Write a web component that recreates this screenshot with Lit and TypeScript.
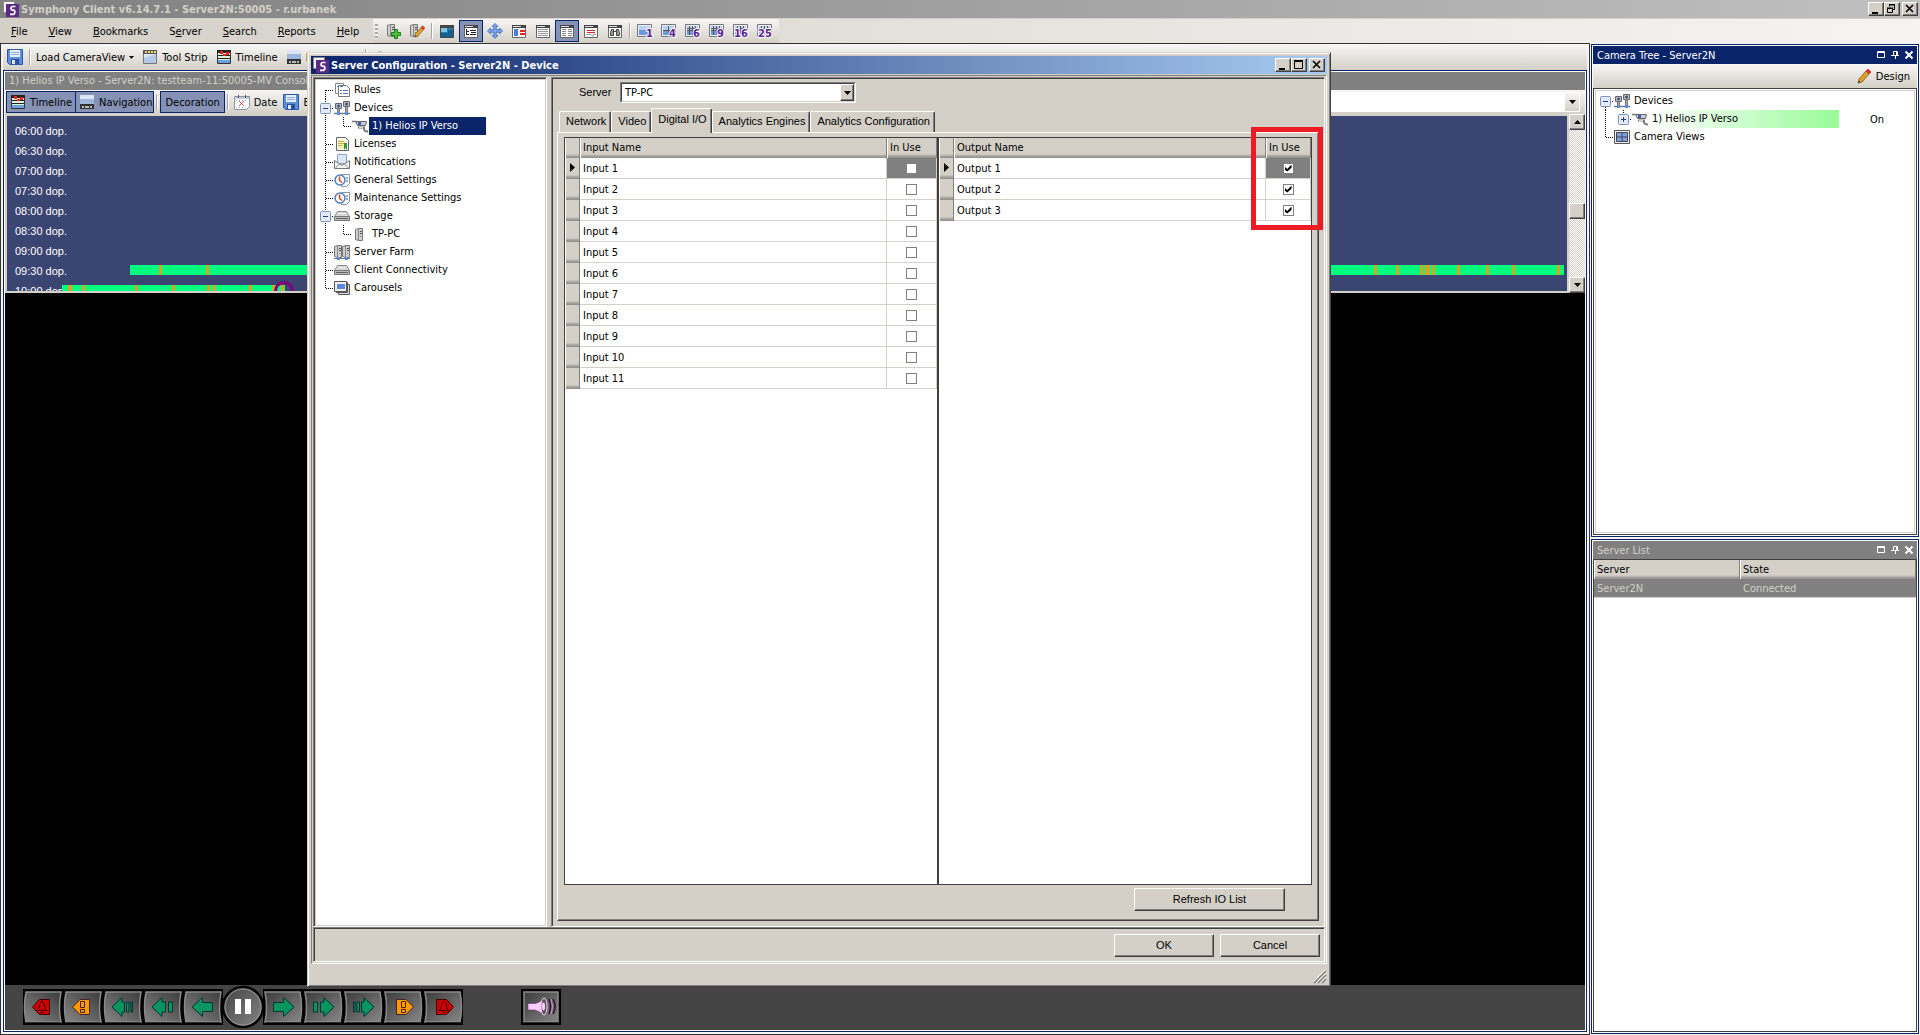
import { LitElement, html, css, svg, nothing, TemplateResult } from "lit";
import { customElement, property } from "lit/decorators.js";
import { classMap } from "lit/directives/class-map.js";
import { styleMap } from "lit/directives/style-map.js";

const icon = (body: unknown, w = 16, h = 16) => html`<svg
  width=${w}
  height=${h}
  viewBox="0 0 ${w} ${h}"
  aria-hidden="true"
>
  ${body}
</svg>`;

const win = (inner: unknown) => svg`<path fill="#fff" stroke="#666" d="M1.500 2.500h13v12h-13z"/><path fill="#444" d="M1 2h14v3H1z"/><path fill="#ddd" d="M2 3h8v1H2z"/>${inner}`;
const grid = (n: string, x: number, cells: number) => svg`<path fill="#eef" stroke="#777" d="M.5 1.500h14v12h-14z"/><path fill="#6f97dc" d="M2 3h11v9H2z"/><path fill="#b9d0f4" d="M2 3h11v4H2z"/>${
  cells > 0 ? svg`<path stroke="#555" d="M2 7.500h11M7.500 3v9"/>` : nothing
}${cells > 1 ? svg`<path stroke="#555" d="M2 5.500h11M4.500 3v9M10.500 3v9"/>` : nothing}<text x=${x} y="14" font-family="DejaVu Sans Condensed, sans-serif" font-size="11" font-weight="700" fill="#5a1e96" stroke="#fff" stroke-width="2" paint-order="stroke">${n}</text>`;
const serverBox = (x: number) => svg`<path fill="#cfcfcf" stroke="#777" d="M${x + 0.5} 2.500l3-1h4v12h-4l-3-1z"/><path stroke="#888" d="M${x + 3.5} 2v11"/><path stroke="#555" d="M${x + 5} 4.500h2M${x + 5} 6.500h2"/><path fill="#3a3" d="M${x + 5} 9h1v1h-1z"/>`;
const drive = svg`<path fill="#d8d8d8" stroke="#888" d="M3.500 3.500h9l3 5h-15z"/><path fill="#bbb" stroke="#777" d="M.5 8.500h15v4h-15z"/><path stroke="#666" d="M2 10.500h12"/><path stroke="#eee" d="M4 5.500h8"/>`;
const clock = svg`<path fill="#fff" stroke="#8a93a8" d="M7.500 2.500h8v9l-3 3h-5z"/><path fill="#9ab" d="M12 5h2v2h-2zM12 8h2v2h-2z"/><circle cx="6" cy="8" r="5" fill="#fff" stroke="#4d7fc4" stroke-width="1.500"/><path fill="none" stroke="#d2451e" stroke-width="1.500" d="M5.500 4.500v4l2.500 2"/>`;
const pencil = svg`<path fill="#e0a030" stroke="#7a5418" stroke-width=".8" d="M3 11l7-8 3 3-7 8-4 1z"/><path fill="#e33" stroke="#922" stroke-width=".6" d="M10 3l2-2 3 3-2 2z"/><path fill="#333" d="M2 15l.8-2.200 1.600 1.500z"/>`;

const ICONS: Record<string, unknown> = {
  app: svg`<path fill="#f4f4f4" stroke="#888" d="M.5 .5h11v11h-11z"/><path fill="#5b2a86" d="M3 3h13v13H3z"/><path fill="none" stroke="#fff" stroke-width="1.700" d="M12.500 5.500H9.500Q8 5.500 8 7.200T9.500 9.200H10.500Q12 9.200 11.800 11.300T9.800 13.300H7"/>`,
  floppy: svg`<path fill="#5e8fdc" stroke="#2d57a8" d="M.5 .5h15v15h-13l-2-2z"/><path fill="#e8f0fc" d="M3 1h10v7H3z"/><path stroke="#8aace0" d="M4 3.500h8M4 5.500h8"/><path fill="#2d4f94" d="M4 10h8v5H4z"/><path fill="#dfe7f4" d="M5 11h3v4H5z"/>`,
  strip: svg`<path fill="#dde8f6" stroke="#777" d="M1.500 1.500h13v13h-13z"/><path fill="#555" d="M1 1h14v4H1z"/><path fill="#f3d77a" d="M3 2h2v2H3zM6 2h2v2H6zM9 2h2v2H9zM12 2h2v2h-2z"/><path fill="#b5cae6" d="M2 9l12-4v9H2z"/>`,
  timeline: svg`<path fill="#dcf3dc" stroke="#333" d="M1.500 1.500h13v13h-13z"/><path fill="#222" d="M1 1h14v3H1zM2 6h12v1H2zM2 9h12v1H2z"/><path fill="#e22" d="M4 2h3v3H4zM10 3h3v3h-3zM7 5h3v2H7z"/><path fill="#6c9fe0" d="M2 11h12v3H2z"/>`,
  nav: svg`<path fill="#9fb6dc" d="M1 1h14v9H1z"/><path fill="#dbe6f5" d="M1 1h14v4H1z"/><path fill="#333" d="M1 10h14v5H1z"/><path fill="#bbb" d="M3 12h2v2H3zM6 12h4v2H6zM11 12h2v2h-2z"/>`,
  date: svg`<path fill="#fff" stroke="#8a93a8" d="M.5 2.500h15v10l-3 3h-12z"/><path fill="#c4cad6" d="M1 3h14v2H1z"/><path stroke="#555" d="M4.500 1v3M11.500 1v3"/><path stroke="#d55" d="M5 7l5 5M10 7l-5 5"/><path stroke="#9ab" stroke-dasharray="1 2" d="M2 6.500h12M2 13.500h9"/>`,
  search: svg`<circle cx="8" cy="8" r="5" fill="#eee" stroke="#777"/>`,
  frame: svg`<path fill="#eee" stroke="#777" d="M1.500 4.500h14v10h-14z"/>`,
  srvAdd: svg`${serverBox(2)}<path fill="#4cc136" stroke="#1c7a12" d="M9.500 6.500h3v3h3v3h-3v3h-3v-3h-3v-3h3z"/>`,
  srvEdit: svg`${serverBox(1)}<g transform="translate(4 2) scale(.8)">${pencil}</g>`,
  monitor: svg`<path fill="#2b7fae" stroke="#444" d="M1.500 2.500h13v12h-13z"/><path fill="#444" d="M1 2h14v3H1z"/><path fill="#12608e" d="M2 10h7V7h5v7H2z"/><path fill="#7cc4e6" d="M2 5h6v4H2z"/>`,
  tree: win(svg`<path stroke="#222" d="M3.500 6v6M4 8.500h2M4 11.500h2M7 7.500h6M8 9.500h5M7 11.500h6"/>`),
  move: svg`<path fill="#7fa8ee" stroke="#3567b8" stroke-width=".8" d="M8 .5l3 3H9.200v3.300h3.300V5l3 3-3 3V9.200H9.200v3.300H11l-3 3-3-3h1.800V9.200H3.500V11l-3-3 3-3v1.800h3.300V3.500H5z"/>`,
  props: win(svg`<path fill="#4a7fd8" d="M3 6h4v7H3z"/><path stroke="#e22" stroke-width="2" d="M9 8h5M9 11h5"/>`),
  list: win(svg`<path stroke="#999" d="M3 6.500h10M3 8.500h10M3 10.500h10M3 12.500h10"/>`),
  cols: win(svg`<path stroke="#888" stroke-width="1" d="M3 6.500h4M9 6.500h4M3 8.500h4M9 8.500h4M3 10.500h4M9 10.500h4M3 12.500h4M9 12.500h4"/>`),
  note: win(svg`<path stroke="#d22" d="M4 7.500h8M4 9.500h8"/><path fill="#fff" stroke="#999" d="M3 11.500h5l2 2v-2h3"/>`),
  find: win(svg`<path fill="#999" stroke="#444" d="M3.500 12.500v-3l1-3h2v6zM9.500 12.500v-6h2l1 3v3zM6.500 8.500h3"/>`),
  g1: grid("1", 9, 0),
  g4: grid("4", 8, 1),
  g6: grid("6", 8, 2),
  g9: grid("9", 8, 2),
  g16: grid("16", 1, 2),
  g25: grid("25", 1, 2),
  pencil,
  rules: svg`<path fill="#fff" stroke="#888" d="M1.500 1.500h8v10h-8z"/><path fill="#fff" stroke="#777" d="M4.500 3.500h8l3 3v8h-11z"/><path stroke="#4a74c8" stroke-width="1" d="M6 8.500h2M9 8.500h5M6 11.500h2M9 11.500h5M3 4.500h2M6 4.500h3"/>`,
  devices: svg`<path fill="#bbb" stroke="#666" d="M1.500 3.500h6v5h-6zM9.500 1.500h6v5h-6z"/><circle cx="4.500" cy="6" r="1.500" fill="#35558f"/><circle cx="12.500" cy="4" r="1.500" fill="#35558f"/><path fill="#aaa" stroke="#777" d="M3.500 8.500h2v4h-2zM11.500 6.500h2v6h-2z"/><path stroke="#777" stroke-width="1.500" d="M0 13.500h16"/><path fill="#5b8be0" d="M3 12h3v3H3zM11 12h3v3h-3z"/>`,
  camera: svg`<path fill="#ccc" stroke="#666" d="M3.500 3.500h11l-1 4h-8z"/><path stroke="#777" stroke-width="1.500" d="M0 3.500h5"/><path fill="#3b62b0" d="M6 4h3v3H6z"/><path fill="none" stroke="#777" stroke-width="2" d="M6 9.500h6v1q0 3 4 3"/><path stroke="#ddd" d="M7 9.500h4"/>`,
  license: svg`<path fill="#fff" stroke="#666" d="M2.500 1.500h9l3 3v10h-12z"/><path fill="#f6f0b0" d="M4 4h7v9H4z"/><path stroke="#c9b54c" d="M4 5.500h6M4 7.500h6M4 9.500h4"/><path fill="#2f9a3a" d="M10 7h3v7l-1.500-2L10 14z"/>`,
  notify: svg`<path fill="#dce8fa" stroke="#8aa4cc" d="M3.500 .5h9v9h-9z"/><path fill="#f4f4f4" stroke="#777" d="M.5 6.500l7.500 5 7.500-5v8H.5z"/><path stroke="#888" d="M1 14.500l5-5M15 14.500l-5-5"/>`,
  clock,
  drive,
  server: svg`<g transform="translate(3 1)">${serverBox(0)}</g>`,
  farm: svg`${serverBox(0)}${serverBox(8)}<path stroke="#777" d="M0 14.500h16"/><path fill="#5b8be0" d="M3 13h3v3H3zM11 13h3v3h-3z"/>`,
  carousel: svg`<path fill="#ddd" stroke="#555" d="M4.500 4.500h11v10h-11zM2.500 2.500h11v10h-11z"/><path fill="#eee" stroke="#555" d="M.5 1.500h12v10H.5z"/><path fill="#5b86da" d="M3 4h8v5H3z"/>`,
  views: svg`<path fill="#eee" stroke="#555" d="M.5 1.500h15v13H.5z"/><path fill="#7ea0dd" stroke="#445" d="M2.500 3.500h11v9h-11z"/><path stroke="#445" d="M8 3v10M2 8h12"/>`,
};
const ic = (name: string) => icon(ICONS[name]);

const base = css`
  *,
  *::before,
  *::after {
    box-sizing: border-box;
  }
  :host {
    font: 11px/13px "DejaVu Sans Condensed", "DejaVu Sans", Tahoma, sans-serif;
    color: #000;
  }
  button,
  select,
  input {
    font: inherit;
    color: inherit;
    margin: 0;
  }
  svg {
    display: block;
    flex: none;
    overflow: visible;
  }
`;

interface Node {
  label: string;
  icon: string;
  open?: boolean;
  state?: string;
  selected?: boolean;
  online?: boolean;
  children?: Node[];
}

@customElement("nav-tree")
class NavTree extends LitElement {
  @property({ attribute: false }) nodes: Node[] = [];

  static styles = [
    base,
    css`
      :host {
        display: block;
      }
      ul {
        list-style: none;
        margin: 0;
        padding: 0;
      }
      .row {
        display: flex;
        align-items: center;
        height: 18px;
        white-space: nowrap;
      }
      .label {
        margin-left: 1px;
        padding: 0 3px;
        line-height: 18px;
      }
      .selected {
        min-width: 117px;
        background: #0a246a;
        color: #fff;
      }
      .online {
        min-width: 190px;
        background: linear-gradient(90deg, #fff, #98fb98);
      }
      .state {
        margin-left: 31px;
      }
    `,
  ];

  private branch(first: boolean, last: boolean, node: Node) {
    return icon(
      svg`<path fill="none" stroke="#000" stroke-dasharray="1 1" d="M9.500 ${first ? 9 : 0}V${last ? 9 : 18}M10 9.500H18"/>${
        node.open === undefined
          ? nothing
          : svg`<rect x="4.500" y="4.500" width="10" height="10" rx="1" fill="#e3eaf6" stroke="#7b93bf"/><path stroke="#1f3f7f" d="M7 9.500h5${node.open ? "" : "M9.500 7v5"}"/>`
      }`,
      18,
      18
    );
  }

  private rows(nodes: Node[], guides: boolean[]): TemplateResult[] {
    return nodes.map((n, i) => {
      const last = i === nodes.length - 1;
      return html`<li>
        <div class="row">
          ${guides.map((g) =>
            icon(g ? svg`<path stroke="#000" stroke-dasharray="1 1" d="M9.500 0V18"/>` : nothing, 18, 18)
          )}
          ${this.branch(i === 0 && guides.length === 0, last, n)}${ic(n.icon)}
          <span class=${classMap({ label: true, selected: !!n.selected, online: !!n.online })}>${n.label}</span>
          ${n.state ? html`<span class="state">${n.state}</span>` : nothing}
        </div>
        ${n.children ? html`<ul>${this.rows(n.children, [...guides, !last])}</ul>` : nothing}
      </li>`;
    });
  }

  render() {
    return html`<ul>${this.rows(this.nodes, [])}</ul>`;
  }
}

@customElement("io-table")
class IoTable extends LitElement {
  @property() kind = "Input";
  @property({ type: Number }) count = 0;
  @property({ type: Boolean }) used = false;

  static styles = [
    base,
    css`
      :host {
        display: block;
        background: #fff;
      }
      table {
        width: 100%;
        border-collapse: separate;
        border-spacing: 0;
        table-layout: fixed;
      }
      th,
      td {
        padding: 0 3px;
        font-weight: 400;
        text-align: left;
      }
      thead th {
        height: 20px;
        padding-bottom: 2px;
        background: linear-gradient(#d4d0c8 80%, #a8a59f 90%, #8c8c8c);
        border-right: 1px solid #808080;
        box-shadow: inset 1px 0 #fff;
      }
      .mark {
        width: 15px;
      }
      .use {
        width: 50px;
      }
      :host([used]) .use {
        width: 45px;
      }
      tbody td {
        height: 21px;
        border-bottom: 1px solid #d4d0c8;
        border-right: 1px solid #d4d0c8;
      }
      tbody td.head {
        padding: 0 0 0 5px;
        border-bottom: 0;
        border-right: 1px solid #808080;
        background: linear-gradient(#d4d0c8 80%, #a8a59f 90%, #8c8c8c);
        box-shadow: inset 1px 0 #fff;
      }
      .head svg {
        margin-top: -2px;
      }
      tbody td.check {
        padding: 0;
      }
      .current {
        background: #808080;
      }
      input {
        appearance: none;
        display: block;
        width: 11px;
        height: 11px;
        margin: 0 auto;
        border: 1px solid #808080;
        background: #fff;
      }
      input:checked::after {
        content: "";
        display: block;
        width: 7px;
        height: 7px;
        margin: 1px;
        background: #000;
        clip-path: polygon(0 30%, 40% 65%, 100% 0, 100% 45%, 40% 100%, 0 70%);
      }
    `,
  ];

  render() {
    return html`<table>
      <thead>
        <tr>
          <th class="mark"></th>
          <th>${this.kind} Name</th>
          <th class="use">In Use</th>
        </tr>
      </thead>
      <tbody>
        ${Array.from({ length: this.count }, (_, i) => {
          const name = `${this.kind} ${i + 1}`;
          return html`<tr>
            <td class="head">${i === 0 ? icon(svg`<path d="M0 0l5 4.500-5 4.500z"/>`, 5, 9) : nothing}</td>
            <td><label for="c${i}">${name}</label></td>
            <td class=${classMap({ check: true, current: i === 0 })}>
              <input type="checkbox" id="c${i}" .checked=${this.used} />
            </td>
          </tr>`;
        })}
      </tbody>
    </table>`;
  }
}

const DEVICE_TREE: Node[] = [
  { label: "Rules", icon: "rules" },
  {
    label: "Devices",
    icon: "devices",
    open: true,
    children: [{ label: "1) Helios IP Verso", icon: "camera", selected: true }],
  },
  { label: "Licenses", icon: "license" },
  { label: "Notifications", icon: "notify" },
  { label: "General Settings", icon: "clock" },
  { label: "Maintenance Settings", icon: "clock" },
  { label: "Storage", icon: "drive", open: true, children: [{ label: "TP-PC", icon: "server" }] },
  { label: "Server Farm", icon: "farm" },
  { label: "Client Connectivity", icon: "drive" },
  { label: "Carousels", icon: "carousel" },
];

const CAMERA_TREE: Node[] = [
  {
    label: "Devices",
    icon: "devices",
    open: true,
    children: [{ label: "1) Helios IP Verso", icon: "camera", open: false, online: true, state: "On" }],
  },
  { label: "Camera Views", icon: "views" },
];

/* Positions along the track, in units of a 1560-unit half hour. */
interface Slot {
  time: string;
  from?: number;
  to?: number;
  events?: [number, number][];
}
const TRACK = 1560;
const SLOTS: Slot[] = [
  { time: "06:00" },
  { time: "06:30" },
  { time: "07:00" },
  { time: "07:30" },
  { time: "08:00" },
  { time: "08:30" },
  { time: "09:00" },
  {
    time: "09:30",
    from: 123,
    to: 1557,
    events: [[152, 3], [199, 3], [1367, 3], [1389, 3], [1413, 3], [1418, 5], [1425, 3], [1450, 3], [1479, 3], [1505, 3], [1550, 3]],
  },
  {
    time: "10:00",
    from: 55,
    to: 278,
    events: [[61, 4], [75, 3], [128, 3], [165, 3], [200, 3], [206, 3], [242, 3], [265, 3], [274, 3]],
  },
];
const pct = (n: number) => `${(n / TRACK) * 100}%`;

const MENU: [string, string, string][] = [
  ["", "F", "ile"],
  ["", "V", "iew"],
  ["", "B", "ookmarks"],
  ["S", "e", "rver"],
  ["", "S", "earch"],
  ["", "R", "eports"],
  ["", "H", "elp"],
];

const GREEN = "#0a9460";
const bell = svg`<path fill="none" stroke="#4a0000" d="M16.500 21.500h11M17.500 21.500q2-1 2-4.500t2.500-5q2.500 1.500 2.500 5t2 4.500M20.500 23.500h3"/>`;
const PLAYER_ICONS: TemplateResult[] = [
  svg`<path fill=${GREEN} stroke="#033" d="M10.500 13.500h10V8.500l10.500 9.500-10.500 9.500v-5h-10z"/>`,
  svg`<path fill=${GREEN} stroke="#033" d="M10.500 13h4v10h-4zM17.500 13H21V8.500l10 9.500-10 9.500V23h-3.500z"/>`,
  svg`<path fill=${GREEN} stroke="#033" d="M10.500 13h1.500v10h-1.500zM14 13h2.500v10h-2.500zM18.500 13h2.500V8.500l10 9.500-10 9.500V23h-2.500z"/>`,
  svg`<path fill="#f90" stroke="#422" d="M13.500 10.500h9.500l7.500 7.500-7.500 7.500h-9.500z"/><path fill="#f90" stroke="#422" d="M18.500 12.500h4v6h-4zM18.500 20.500h4v3h-4z"/>`,
  svg`<path fill="#c00" stroke="#400" d="M13.500 10.500h10l7 7.500-7 7.500h-10z"/><g transform="translate(-1 0)">${bell}</g>`,
];
const NAMES = ["Step", "Fast", "Faster", "Alert", "Alarm"];

@customElement("app-root")
class AppRoot extends LitElement {
  static styles = [
    base,
    css`
      :host {
        display: flex;
        flex-direction: column;
        position: relative;
        min-height: 100vh;
        background: #f5f4f2;
        white-space: nowrap;
      }
      /* window captions */
      .caption {
        display: flex;
        align-items: center;
        height: 18px;
        padding: 0 2px 0 3px;
        gap: 2px;
        font-weight: 700;
      }
      .caption h1,
      .caption h2 {
        flex: 1;
        margin: 0;
        font: inherit;
      }
      .main-caption {
        background: linear-gradient(90deg, #808080, #c0c0c0);
        color: #d4d0c8;
      }
      .sys {
        display: flex;
      }
      .sys button,
      .bevel {
        padding: 0;
        background: #d4d0c8;
        border: 1px solid;
        border-color: #fff #404040 #404040 #fff;
        box-shadow: inset -1px -1px #808080;
      }
      .sys button {
        width: 16px;
        height: 14px;
      }
      .sys button:last-child {
        margin-left: 2px;
      }
      /* menu */
      .menubar {
        display: flex;
        height: 25px;
        border-top: 1px solid #d4d0c8;
        background: linear-gradient(90deg, #d4d0c8, #f5f4f2);
      }
      .menu {
        display: flex;
        width: 373px;
        padding: 0 0 0 5px;
      }
      .menu button {
        padding: 0 6px;
        margin-right: 9px;
        border: 0;
        background: none;
      }
      .strip {
        display: flex;
        align-items: center;
        padding: 0 2px;
        background: linear-gradient(#f7f6f5, #d4d0c8);
      }
      .grip {
        width: 3px;
        height: 15px;
        margin-right: 3px;
        background: repeating-linear-gradient(#a8a8a8 0 2px, #f4f4f4 2px 4px);
      }
      .tool {
        display: grid;
        place-items: center;
        width: 24px;
        height: 22px;
        padding: 0;
        border: 1px solid transparent;
        background: none;
      }
      .on {
        background: #8592b5;
        border: 1px solid #0a246a;
      }
      .sep {
        width: 2px;
        height: 16px;
        margin: 0 2px;
        border-left: 1px solid #a6a6a6;
        border-right: 1px solid #fff;
      }
      /* body */
      .body {
        flex: 1;
        display: grid;
        grid-template-columns: minmax(0, 1fr) 330px;
      }
      main {
        display: flex;
        flex-direction: column;
        min-width: 0;
        padding: 0 2px 2px;
        border: 1px solid #333;
        background: #f5f4f2;
      }
      .bar {
        display: flex;
        align-items: center;
        background: linear-gradient(#f7f6f5, #d4d0c8);
      }
      .bar button {
        display: flex;
        align-items: center;
        gap: 4px;
        padding: 0;
        border: 0;
        background: none;
      }
      .load-bar {
        height: 26px;
        padding: 0 4px;
        gap: 8px;
      }
      .load-bar .sep {
        margin: 0 -3px 0 -2px;
      }
      .load-bar .extra {
        margin-left: 4px;
      }
      .console {
        flex: 1;
        display: flex;
        flex-direction: column;
        border: 1px solid #0a246a;
        padding: 1px;
        background: #fff;
      }
      .console h2,
      .panel h2 {
        margin: 0;
        font: inherit;
      }
      .console h2 {
        height: 18px;
        padding: 0 4px;
        line-height: 18px;
        background: #808080;
        color: #d4d0c8;
      }
      .console-bar {
        height: 24px;
        padding: 0 5px 0 1px;
      }
      .console-bar button.on {
        height: 22px;
        padding: 0 3px;
        border: 1px solid #0a246a;
        background: #8592b5;
      }
      .console-bar button.on + button.on {
        margin-left: -1px;
        padding: 0 1px 0 3px;
      }
      .console-bar button.deco {
        padding: 0 4px;
      }
      .console-bar .date {
        margin: 0 6px 0 3px;
      }
      .pick {
        display: flex;
        flex: 1;
        min-width: 0;
        height: 20px;
        margin-left: 40px;
        position: relative;
      }
      .pick select {
        appearance: none;
        flex: 1;
        min-width: 0;
        border: 0;
        padding: 0 16px 0 3px;
        border-radius: 0;
        background: #fff;
      }
      .drop {
        position: absolute;
        top: 1px;
        right: 1px;
        bottom: 1px;
        width: 14px;
        display: grid;
        place-items: center;
        pointer-events: none;
      }
      .flat {
        background: linear-gradient(#f7f6f5, #d4d0c8);
      }
      .timeline {
        display: flex;
        height: 179px;
        background: #d4d0c8;
      }
      .track {
        flex: 1;
        min-width: 0;
        margin: 2px;
        padding-top: 5px;
        overflow: hidden;
        background: #3b4572;
        color: #fff;
        font-family: "Liberation Sans", Arial, sans-serif;
      }
      .slot {
        position: relative;
        height: 20px;
        padding-left: 8px;
        line-height: 20px;
      }
      .seg,
      .event {
        position: absolute;
        top: 4px;
        height: 10px;
        background: #00ff7f;
      }
      .event {
        background: #daa520;
      }
      .playhead {
        position: absolute;
        top: 0;
        width: 20px;
        height: 20px;
        border: 3px solid purple;
        border-radius: 50%;
      }
      .scroll {
        display: flex;
        flex-direction: column;
        width: 16px;
        background: repeating-conic-gradient(#fff 0 25%, #d4d0c8 0 50%) 0 0 / 2px 2px;
      }
      .scroll button {
        display: grid;
        place-items: center;
        height: 16px;
      }
      .scroll .gap-a {
        flex: 73;
      }
      .scroll .gap-b {
        flex: 58;
      }
      .video {
        flex: 1;
        background: #000;
      }
      .player {
        display: flex;
        align-items: center;
        height: 45px;
        padding: 0 18px;
        background: #444;
      }
      .player button {
        padding: 0;
        border: 0;
        background: none;
      }
      .player .key {
        margin-bottom: 1px;
      }
      .player .pause {
        margin: 0 -2px;
        z-index: 1;
      }
      .player .sound {
        margin-left: 58px;
      }
      /* side panels */
      aside {
        display: grid;
        grid-template-rows: calc(50% - 2px) 1fr;
        gap: 2px;
        padding: 1px;
      }
      .panel {
        display: flex;
        flex-direction: column;
        border: 1px solid #0a246a;
        padding: 1px;
        background: #fff;
      }
      .panel header {
        display: flex;
        align-items: center;
        height: 18px;
        padding: 0 1px 0 4px;
        background: #0a246a;
        color: #fff;
      }
      .panel header h2 {
        flex: 1;
      }
      .panel header button {
        width: 14px;
        padding: 0;
        border: 0;
        background: none;
        display: grid;
        place-items: center;
      }
      .panel .idle {
        background: #808080;
        color: #d4d0c8;
      }
      .design {
        height: 24px;
        padding: 0 7px;
        justify-content: flex-end;
      }
      .well {
        flex: 1;
        border: 1px solid #404040;
        padding: 1px;
      }
      .well nav-tree {
        height: 100%;
        border: 1px solid #d4d0c8;
        padding-top: 1px;
      }
      .servers {
        flex: 1;
        border: 1px solid #404040;
      }
      .servers table {
        width: 100%;
        border-spacing: 0;
        table-layout: fixed;
      }
      .servers th,
      .servers td {
        height: 19px;
        padding: 0 3px;
        text-align: left;
        font-weight: 400;
      }
      .servers th {
        padding-bottom: 1px;
        background: linear-gradient(#d4d0c8 80%, #a8a59f 90%, #8c8c8c);
        box-shadow: inset 1px 0 #fff, inset -1px 0 #808080;
      }
      .servers th:first-child {
        width: 146px;
      }
      .servers td {
        background: #808080;
        color: #d4d0c8;
        border-bottom: 1px solid #d4d0c8;
      }
      /* dialog */
      .dialog {
        position: absolute;
        inset: 52px 589px 48px 307px;
        display: flex;
        flex-direction: column;
        padding: 3px;
        border: 1px solid;
        border-color: #d4d0c8 #404040 #404040 #d4d0c8;
        box-shadow: inset 1px 1px #fff, inset -1px -1px #808080;
        background: #d4d0c8;
      }
      .dialog .caption {
        background: linear-gradient(90deg, #0a246a, #a6caf0);
        color: #fff;
        padding-left: 2px;
      }
      .frame {
        flex: 1;
        display: flex;
        flex-direction: column;
        min-height: 0;
        margin-top: 1px;
        border: 1px solid;
        border-color: #808080 #fff #fff #808080;
        padding: 1px;
      }
      .panes {
        flex: 1;
        display: grid;
        grid-template-columns: 234px minmax(0, 1fr);
        gap: 4px;
        min-height: 0;
      }
      .sunken {
        border: 1px solid;
        border-color: #808080 #fff #fff #808080;
        box-shadow: inset 1px 1px #404040;
      }
      .tree-pane {
        padding: 2px 1px 1px 2px;
      }
      .tree-pane nav-tree {
        height: 100%;
        padding-top: 1px;
        background: #fff;
      }
      .config {
        display: flex;
        flex-direction: column;
        padding: 4px 5px 5px 5px;
      }
      .ms {
        font-family: "Liberation Sans", Arial, sans-serif;
      }
      .server-row {
        display: flex;
        align-items: center;
        padding-left: 22px;
      }
      .server-row label {
        width: 41px;
      }
      .server-row .pick {
        flex: none;
        width: 236px;
        height: 21px;
        margin: 0;
        border: 1px solid;
        border-color: #808080 #fff #fff #808080;
      }
      .server-row select {
        border: 1px solid #404040;
        border-right-color: #d4d0c8;
        border-bottom-color: #d4d0c8;
      }
      .tabs {
        display: flex;
        align-items: flex-end;
        height: 29px;
        padding-left: 2px;
      }
      .tabs button {
        height: 21px;
        padding: 0 4px 1px 6px;
        border: 1px solid;
        border-color: #fff #404040 transparent #fff;
        border-bottom: 0;
        border-radius: 2px 2px 0 0;
        background: #d4d0c8;
        box-shadow: inset -1px 0 #808080;
      }
      .tabs button.active {
        height: 25px;
        margin-bottom: -1px;
        padding-bottom: 4px;
        z-index: 1;
      }
      .page {
        flex: 1;
        display: flex;
        flex-direction: column;
        min-height: 0;
        border: 1px solid;
        border-color: #fff #404040 #404040 #fff;
        box-shadow: inset -1px -1px #808080;
        padding: 4px 6px 9px 6px;
      }
      .lists {
        flex: 1;
        display: grid;
        grid-template-columns: 1fr 1fr;
        gap: 2px;
        border: 1px solid #404040;
        background: #404040;
      }
      .push {
        height: 23px;
        font-family: "Liberation Sans", Arial, sans-serif;
      }
      .refresh {
        align-self: flex-end;
        width: 151px;
        margin: 3px 27px 0 0;
      }
      .actions {
        display: flex;
        justify-content: flex-end;
        align-items: flex-start;
        gap: 6px;
        height: 35px;
        padding: 6px 4px 0;
      }
      .actions button {
        width: 100px;
      }
      .status {
        display: flex;
        justify-content: flex-end;
        align-items: flex-end;
        height: 19px;
        padding-right: 1px;
      }
      .highlight {
        position: absolute;
        top: 74px;
        right: 7px;
        width: 72px;
        height: 103px;
        border: 5px solid #ed1c24;
        pointer-events: none;
      }
    `,
  ];

  private sysButtons(restore: boolean) {
    return html`<div class="sys">
      <button aria-label="Minimize">${icon(svg`<path d="M3 9h6v2H3z"/>`, 14, 12)}</button>
      <button aria-label=${restore ? "Restore" : "Maximize"}>
        ${icon(
          restore
            ? svg`<path fill="none" stroke="#000" d="M4.500 3.500v-2h5v5h-2M2.500 5.500h5v4h-5zM4 2h6M2 5h6"/>`
            : svg`<path fill="none" stroke="#000" d="M2.500 2.500h8v7h-8zM2 1.500h9"/>`,
          14,
          12
        )}
      </button>
      <button aria-label="Close">${icon(svg`<path stroke="#000" stroke-width="1.600" d="M3 2l7 7M10 2L3 9"/>`, 14, 12)}</button>
    </div>`;
  }

  private panelButtons() {
    return html`<button aria-label="Maximize panel">
        ${icon(svg`<path fill="none" stroke="#fff" d="M1.500 1.500h7v6h-7zM1 2.500h8"/>`, 10, 10)}
      </button>
      <button aria-label="Pin panel">
        ${icon(svg`<path fill="none" stroke="#fff" d="M3.500 5V1.500h4V5M6.500 1v4M1 5.500h8M5.500 6v3"/>`, 10, 10)}
      </button>
      <button aria-label="Close panel">
        ${icon(svg`<path stroke="#fff" stroke-width="2" d="M1.500 1.500l7 7M8.500 1.500l-7 7"/>`, 10, 10)}
      </button>`;
  }

  private key(body: unknown, name: string, mirror: boolean, sound = false) {
    return html`<button class=${classMap({ key: true, sound })} aria-label=${name}>
      ${icon(
        svg`<g transform=${mirror ? "translate(40 0) scale(-1 1)" : ""}>
          <path d="M0 0h40v36H0z"/>
          <path fill="url(#face)" stroke="#8a8a8a" stroke-width="1.500" d=${
            sound ? "M3 3h34v30H3z" : "M2 3Q5 18 2 33H37Q40 18 37 3z"
          }/>
          <path fill="none" stroke="#2c2c2c" d="M3 33.500H37"/>
          ${body}
        </g><defs><linearGradient id="face" x1="0" y1="0" x2="1" y2="1"><stop offset="0" stop-color="#3c3c3c"/><stop offset="1" stop-color="#868686"/></linearGradient></defs>`,
        40,
        36
      )}
    </button>`;
  }

  private tools(names: string[]) {
    return names.map((n) =>
      n === "|"
        ? html`<span class="sep"></span>`
        : html`<button class=${classMap({ tool: true, on: n === "tree" || n === "cols" })} aria-label=${n}>${ic(n)}</button>`
    );
  }

  private arrow(up = false) {
    return icon(svg`<path d=${up ? "M0 4h7L3.500 0z" : "M0 0h7L3.500 4z"}/>`, 7, 4);
  }

  render() {
    return html`
      <header class="caption main-caption">
        ${ic("app")}
        <h1>Symphony Client v6.14.7.1 - Server2N:50005 - r.urbanek</h1>
        ${this.sysButtons(true)}
      </header>
      <div class="menubar">
        <nav class="menu">${MENU.map(([a, b, c]) => html`<button>${a}<u>${b}</u>${c}</button>`)}</nav>
        <div class="strip">
          <span class="grip"></span>
          ${this.tools(["srvAdd", "srvEdit", "|", "monitor", "tree", "move", "props", "list", "cols", "note", "find", "|", "g1", "g4", "g6", "g9", "g16", "g25"])}
        </div>
      </div>
      <div class="body">
        <main>
          <div class="bar load-bar">
            <button aria-label="Save">${ic("floppy")}</button>
            <span class="sep"></span>
            <button>Load CameraView ${icon(svg`<path d="M0 0h5L2.500 3z"/>`, 5, 3)}</button>
            <button>${ic("strip")}Tool Strip</button>
            <button>${ic("timeline")}Timeline</button>
            <button>${ic("nav")}Navigation</button>
            <span class="sep"></span>
            <button aria-label="Search">${ic("search")}</button>
            <button aria-label="Layout">${ic("frame")}</button>
            <button class="extra" aria-label="Window">${ic("frame")}</button>
          </div>
          <section class="console">
            <h2>1) Helios IP Verso - Server2N: testteam-11:50005-MV Console</h2>
            <div class="bar console-bar">
              <button class="on">${ic("timeline")}Timeline</button>
              <button class="on">${ic("nav")}Navigation</button>
              <span class="sep"></span>
              <button class="on deco">Decoration</button>
              <span class="sep"></span>
              <button class="date">${ic("date")}Date</button>
              <button>${ic("floppy")}Export</button>
              <div class="pick">
                <select aria-label="Bookmark"></select>
                <span class="drop flat">${this.arrow()}</span>
              </div>
            </div>
            <div class="timeline">
              <div class="track">
                ${SLOTS.map(
                  (s) => html`<div class="slot">
                    ${s.time} dop.
                    ${s.from !== undefined
                      ? html`<span class="seg" style=${styleMap({ left: pct(s.from), width: pct(s.to! - s.from) })}></span>`
                      : nothing}
                    ${s.events?.map(
                      ([at, w]) => html`<span class="event" style=${styleMap({ left: pct(at), width: pct(w) })}></span>`
                    )}
                    ${s.time === "10:00" ? html`<span class="playhead" style=${styleMap({ left: pct(267) })}></span>` : nothing}
                  </div>`
                )}
              </div>
              <div class="scroll">
                <button class="bevel" aria-label="Scroll up">${this.arrow(true)}</button>
                <span class="gap-a"></span>
                <button class="bevel" aria-label="Scroll thumb"></button>
                <span class="gap-b"></span>
                <button class="bevel" aria-label="Scroll down">${this.arrow()}</button>
              </div>
            </div>
            <div class="video"></div>
            <div class="player">
              ${[...PLAYER_ICONS].reverse().map((p, i) => this.key(p, `${NAMES[4 - i]} backward`, true))}
              <button class="pause" aria-label="Pause">
                ${icon(
                  svg`<defs><linearGradient id="disc" x1="0" y1="0" x2="1" y2="1"><stop offset="0" stop-color="#444"/><stop offset="1" stop-color="#858585"/></linearGradient></defs><circle cx="22" cy="21" r="20" fill="url(#disc)" stroke="#000" stroke-width="2.500"/><circle cx="22" cy="21" r="18" fill="none" stroke="#999"/><path fill="#fff" d="M14 13h6v15h-6zM24 13h6v15h-6z"/>`,
                  44,
                  43
                )}
              </button>
              ${PLAYER_ICONS.map((p, i) => this.key(p, `${NAMES[i]} forward`, false))}
              ${this.key(
                svg`<path fill="#fcf" stroke="#636" stroke-width=".6" d="M7 14.500h7q6-1 8-5v16q-3-3-8-4.500H7z"/><ellipse cx="23" cy="17.500" rx="3" ry="8.500" fill="#545454" stroke="#fcf"/><ellipse cx="22.500" cy="17.500" rx="1.500" ry="4" fill="#fcf"/><path fill="none" stroke="#313" stroke-width="1.500" d="M28 10q3 7.500 0 15M32 10q4 7.500 0 15"/><path fill="none" stroke="#c9c" d="M30 10q3 7.500 0 15"/>`,
                "Sound",
                false,
                true
              )}
            </div>
          </section>
        </main>
        <aside>
          <section class="panel">
            <header>
              <h2>Camera Tree - Server2N</h2>
              ${this.panelButtons()}
            </header>
            <div class="bar design"><button>${ic("pencil")}Design</button></div>
            <div class="well"><nav-tree .nodes=${CAMERA_TREE}></nav-tree></div>
          </section>
          <section class="panel">
            <header class="idle">
              <h2>Server List</h2>
              ${this.panelButtons()}
            </header>
            <div class="servers">
              <table>
                <thead>
                  <tr>
                    <th>Server</th>
                    <th>State</th>
                  </tr>
                </thead>
                <tbody>
                  <tr>
                    <td>Server2N</td>
                    <td>Connected</td>
                  </tr>
                </tbody>
              </table>
            </div>
          </section>
        </aside>
      </div>

      <section class="dialog" role="dialog" aria-labelledby="dlg-title">
        <header class="caption">
          ${ic("app")}
          <h2 id="dlg-title">Server Configuration - Server2N - Device</h2>
          ${this.sysButtons(false)}
        </header>
        <div class="frame">
          <div class="panes">
            <div class="tree-pane sunken"><nav-tree .nodes=${DEVICE_TREE}></nav-tree></div>
            <div class="config sunken">
              <div class="server-row">
                <label class="ms" for="server">Server</label>
                <div class="pick">
                  <select id="server">
                    <option>TP-PC</option>
                  </select>
                  <span class="drop bevel">${this.arrow()}</span>
                </div>
              </div>
              <div class="tabs ms" role="tablist">
                ${["Network", "Video", "Digital I/O", "Analytics Engines", "Analytics Configuration"].map(
                  (t, i) => html`<button role="tab" aria-selected=${i === 2} class=${i === 2 ? "active" : ""}>${t}</button>`
                )}
              </div>
              <div class="page">
                <div class="lists">
                  <io-table kind="Input" count="11"></io-table>
                  <io-table kind="Output" count="3" used></io-table>
                </div>
                <button class="bevel push refresh">Refresh IO List</button>
              </div>
            </div>
          </div>
          <div class="actions sunken">
            <button class="bevel push">OK</button>
            <button class="bevel push">Cancel</button>
          </div>
        </div>
        <footer class="status">
          ${icon(
            svg`<path stroke="#808080" stroke-width="1.500" d="M1 13L13 1M5 13L13 5M9 13L13 9"/><path stroke="#fff" d="M0 12L12 0M4 12L13 3M8 12L13 7"/>`,
            13,
            13
          )}
        </footer>
        <div class="highlight"></div>
      </section>
    `;
  }
}
